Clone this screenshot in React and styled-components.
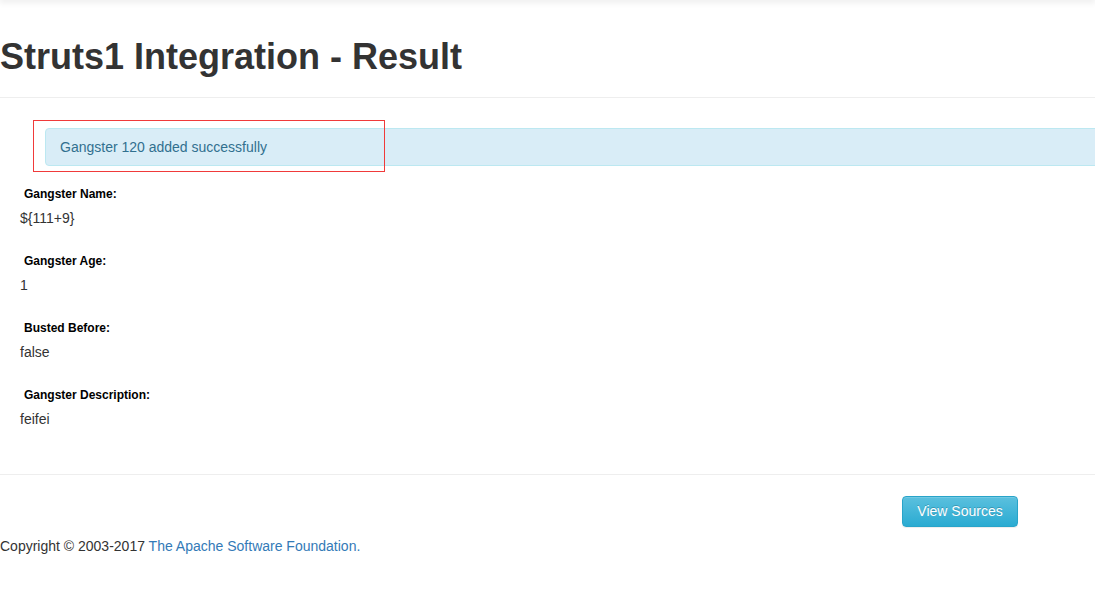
import React from "react";
import styled, { createGlobalStyle } from "styled-components";

const GlobalStyle = createGlobalStyle`
  html, body {
    margin: 0;
    padding: 0;
    background: #fff;
    overflow: hidden;
  }
  body {
    font-family: "Liberation Sans", Arial, Helvetica, sans-serif;
    font-size: 14px;
    line-height: 20px;
    color: #333;
  }
`;

const Page = styled.div`
  position: relative;
  overflow: hidden;
  padding-bottom: 40px;
`;

const TopShadow = styled.div`
  height: 1px;
  margin-top: -1px;
  box-shadow: 0 0 7px 1px rgba(0, 0, 0, 0.16);
`;

const PageHeader = styled.div`
  padding-top: 37px;
  padding-bottom: 20px;
  border-bottom: 1px solid #eee;
`;

const Title = styled.h1`
  margin: 0;
  font-size: 36px;
  line-height: 40px;
  font-weight: bold;
  color: #333;
`;

const AlertArea = styled.div`
  position: relative;
  margin-top: 30px;
  padding-left: 45px;
`;

const Alert = styled.div`
  width: 1100px;
  padding: 8px 14px;
  background: #d9edf7;
  border: 1px solid #bce8f1;
  border-radius: 4px;
  color: #31708f;
`;

const Highlight = styled.div`
  position: absolute;
  left: 33px;
  top: -8px;
  width: 350px;
  height: 50px;
  border: 1px solid #f03a3a;
  pointer-events: none;
`;

const Fields = styled.div`
  margin-top: 19px;
  padding-left: 20px;
`;

const Field = styled.div`
  margin-bottom: 24px;
  &:last-child {
    margin-bottom: 0;
  }
`;

const Label = styled.div`
  padding-left: 4px;
  font-size: 12px;
  line-height: 18px;
  font-weight: bold;
  color: #000;
`;

const Value = styled.div`
  margin-top: 5px;
  font-size: 14px;
  line-height: 20px;
  color: #333;
`;

const Rule = styled.hr`
  margin: 45px 0 0;
  border: 0;
  border-top: 1px solid #eee;
`;

const Actions = styled.div`
  display: flex;
  justify-content: flex-end;
  margin-top: 21px;
  padding-right: 77px;
`;

const Button = styled.button`
  width: 116px;
  height: 31px;
  padding: 0 0 1px;
  font-family: inherit;
  font-size: 14px;
  color: #fff;
  text-shadow: 0 -1px 0 rgba(0, 0, 0, 0.2);
  background: linear-gradient(to bottom, #5bc0de 0%, #2aabd2 100%);
  border: 1px solid #28a4c9;
  border-radius: 4px;
  box-shadow: inset 0 1px 0 rgba(255, 255, 255, 0.15), 0 1px 1px rgba(0, 0, 0, 0.075);
  cursor: pointer;
`;

const Copyright = styled.p`
  margin: 9px 0 0;
  font-size: 14px;
  line-height: 20px;
  color: #333;
`;

const Link = styled.a`
  color: #337ab7;
  text-decoration: none;
`;

const fields = [
  { label: "Gangster Name:", value: "${111+9}" },
  { label: "Gangster Age:", value: "1" },
  { label: "Busted Before:", value: "false" },
  { label: "Gangster Description:", value: "feifei" },
];

const App = () => {
  return (
    <Page>
      <GlobalStyle />
      <TopShadow />
      <PageHeader>
        <Title>Struts1 Integration - Result</Title>
      </PageHeader>
      <AlertArea>
        <Alert>Gangster 120 added successfully</Alert>
        <Highlight />
      </AlertArea>
      <Fields>
        {fields.map((f) => (
          <Field key={f.label}>
            <Label>{f.label}</Label>
            <Value>{f.value}</Value>
          </Field>
        ))}
      </Fields>
      <Rule />
      <Actions>
        <Button>View Sources</Button>
      </Actions>
      <Copyright>
        Copyright © 2003-2017 <Link href="#">The Apache Software Foundation.</Link>
      </Copyright>
    </Page>
  );
};

export default App;
